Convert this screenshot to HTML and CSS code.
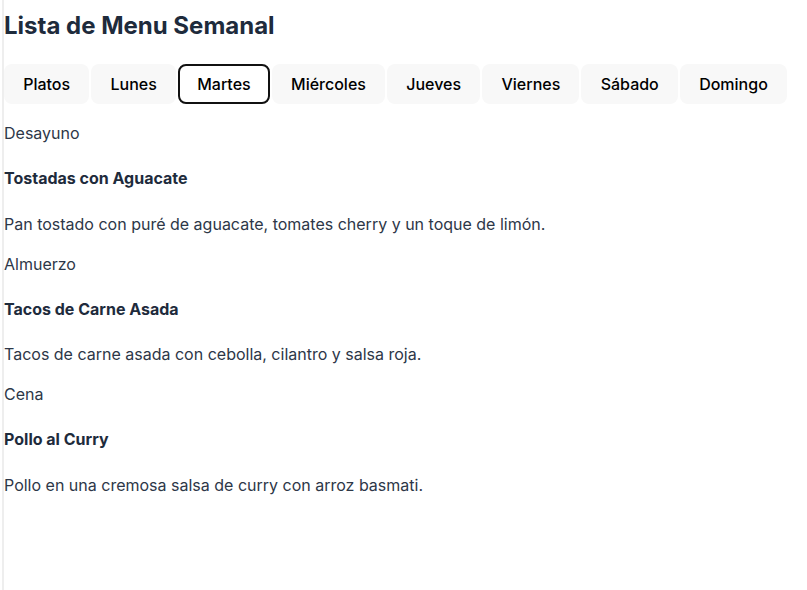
FILE: index.html
```html
<!DOCTYPE html>
<html lang="es">
<head>
<meta charset="utf-8">
<title>Lista de Menu Semanal</title>
<link rel="stylesheet" href="styles.css">
</head>
<body>
<div class="page">
  <h2 class="title">Lista de Menu Semanal</h2>
  <nav class="tabs">
    <button class="tab">Platos</button>
    <button class="tab">Lunes</button>
    <button class="tab active">Martes</button>
    <button class="tab">Miércoles</button>
    <button class="tab">Jueves</button>
    <button class="tab">Viernes</button>
    <button class="tab">Sábado</button>
    <button class="tab">Domingo</button>
  </nav>
  <div class="menu">
    <section class="meal">
      <div class="meal-label">Desayuno</div>
      <h4 class="meal-name">Tostadas con Aguacate</h4>
      <p class="meal-desc">Pan tostado con puré de aguacate, tomates cherry y un toque de limón.</p>
    </section>
    <section class="meal">
      <div class="meal-label">Almuerzo</div>
      <h4 class="meal-name">Tacos de Carne Asada</h4>
      <p class="meal-desc">Tacos de carne asada con cebolla, cilantro y salsa roja.</p>
    </section>
    <section class="meal">
      <div class="meal-label">Cena</div>
      <h4 class="meal-name">Pollo al Curry</h4>
      <p class="meal-desc">Pollo en una cremosa salsa de curry con arroz basmati.</p>
    </section>
  </div>
</div>
</body>
</html>
```
FILE: styles.css
```css
html, body {
  margin: 0;
  padding: 0;
  background: #ffffff;
  height: 100%;
}
body {
  font-family: Inter, "Noto Sans", sans-serif;
  font-size: 16px;
  line-height: 1.5;
  color: #2d3748;
}
.page {
  margin-left: 2px;
  border-left: 2px solid #eeeeee;
  min-height: 100%;
  box-sizing: border-box;
  padding-top: 8px;
}
.title {
  margin: 0 0 20px 0;
  font-size: 24px;
  font-weight: 700;
  color: #1e2b3c;
  line-height: 36px;
}
.tabs {
  display: flex;
  gap: 2px;
  margin-bottom: 17px;
}
.tab {
  font-family: Inter, "Noto Sans", sans-serif;
  font-size: 16px;
  font-weight: 500;
  color: #000000;
  background: #f8f8f8;
  border: 2px solid transparent;
  border-radius: 8px;
  height: 40px;
  padding: 0 17.2px;
  cursor: pointer;
}
.tab.active {
  background: #ffffff;
  border-color: #111111;
}
.meal-label {
  line-height: 24px;
}
.meal-name {
  margin: 21.3px 0;
  font-size: 16px;
  font-weight: 700;
  line-height: 24px;
  color: #1e2b3c;
}
.meal-desc {
  margin: 16px 0;
  line-height: 24px;
}
```
